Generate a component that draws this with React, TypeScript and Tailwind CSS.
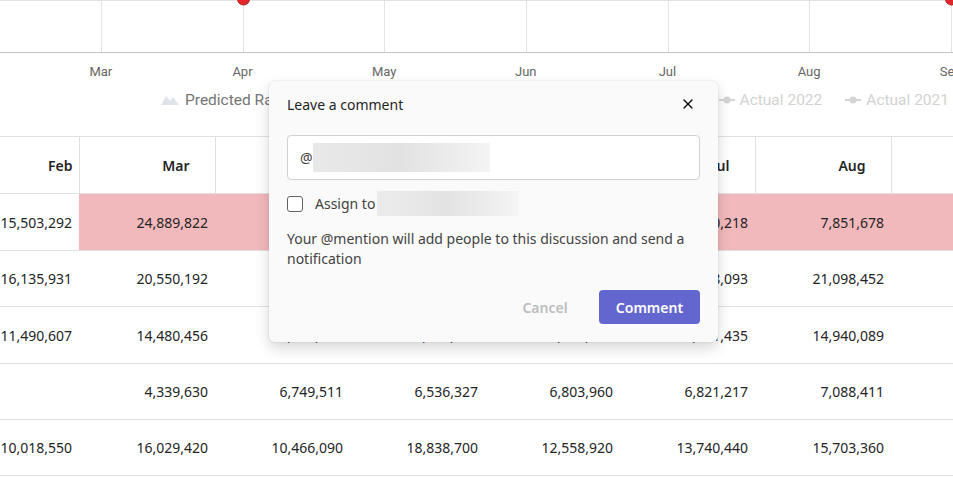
import React from "react";
import { X, TriangleAlert } from "lucide-react";

const gridX = [101, 243, 384, 526, 668, 809, 951];
const axisMonths = ["Mar", "Apr", "May", "Jun", "Jul", "Aug", "Sep"];
const headers = ["Feb", "Mar", "Apr", "May", "Jun", "Jul", "Aug", "Sep"];

interface Row {
  cells: string[];
  height: string;
  highlight?: boolean;
  flag?: boolean;
}

const rows: Row[] = [
  {
    cells: ["15,503,292", "24,889,822", "18,204,517", "21,377,064", "19,615,830", "12,430,218", "7,851,678", "8,402,116"],
    height: "h-[57px]",
    highlight: true,
  },
  {
    cells: ["16,135,931", "20,550,192", "17,962,305", "19,840,776", "18,113,640", "20,318,093", "21,098,452", "9,774,210"],
    height: "h-[56px]",
    flag: true,
  },
  {
    cells: ["11,490,607", "14,480,456", "13,215,908", "12,874,336", "13,902,514", "14,221,435", "14,940,089", "7,311,872"],
    height: "h-[57px]",
    flag: true,
  },
  {
    cells: ["", "4,339,630", "6,749,511", "6,536,327", "6,803,960", "6,821,217", "7,088,411", "3,205,118"],
    height: "h-[56px]",
  },
  {
    cells: ["10,018,550", "16,029,420", "10,466,090", "18,838,700", "12,558,920", "13,740,440", "15,703,360", "6,115,240"],
    height: "h-[56px]",
  },
];

const colWidths = ["w-[79px]", "w-[136px]", "w-[135px]", "w-[135px]", "w-[135px]", "w-[135px]", "w-[136px]", "w-[151px]"];

function LegendLine() {
  return (
    <svg width="18" height="10" viewBox="0 0 18 10" className="shrink-0">
      <line x1="1" y1="5" x2="17" y2="5" stroke="#d4d4d4" strokeWidth="2" />
      <circle cx="9" cy="5" r="3.5" fill="#d4d4d4" />
    </svg>
  );
}

function Chart() {
  return (
    <div className="h-[136px] flex flex-col" style={{ fontFamily: "Roboto, 'Liberation Sans', sans-serif" }}>
      <svg width="953" height="53" className="block shrink-0 overflow-visible">
        <line x1="0" y1="0.5" x2="953" y2="0.5" stroke="#e3e3e3" />
        {gridX.map((x) => (
          <line key={x} x1={x + 0.5} y1="0" x2={x + 0.5} y2="52" stroke="#e3e3e3" />
        ))}
        <line x1="0" y1="52.5" x2="953" y2="52.5" stroke="#c4c4c4" />
        <circle cx="243.5" cy="-1" r="6" fill="#e3262b" stroke="#b51c20" strokeWidth="1" />
        <circle cx="951.5" cy="-1" r="6" fill="#e3262b" stroke="#b51c20" strokeWidth="1" />
      </svg>

      <div className="flex ml-[30px] mt-[11px] text-[13px] leading-4 text-[#666]">
        {axisMonths.map((m) => (
          <span key={m} className="w-[141.67px] shrink-0 text-center">
            {m}
          </span>
        ))}
      </div>

      <div className="flex items-center mt-[10px] pr-[4px] text-[15.5px] leading-5">
        <div className="flex items-center gap-[22px] ml-[161px]">
          <div className="flex items-center gap-[6px] text-[#757575]">
            <svg width="18" height="10" viewBox="0 0 18 10" className="shrink-0">
              <path d="M0 10 L5 1 L9 6 L12 2 L18 10 Z" fill="#dfe4ea" />
            </svg>
            Predicted Range
          </div>
          <div className="flex items-center gap-[5px] text-[#cfcfcf]">
            <LegendLine />
            Forecast 2023
          </div>
        </div>
        <div className="flex items-center gap-[22px] ml-auto text-[#d2d2d2]">
          <div className="flex items-center gap-[4px]">
            <LegendLine />
            Actual 2022
          </div>
          <div className="flex items-center gap-[4px]">
            <LegendLine />
            Actual 2021
          </div>
        </div>
      </div>
    </div>
  );
}

function DataTable() {
  return (
    <div className="overflow-hidden">
      <table className="table-fixed border-collapse w-[1042px] text-[14px] text-[#242424]">
        <colgroup>
          {colWidths.map((w, i) => (
            <col key={i} className={w} />
          ))}
        </colgroup>
        <thead>
          <tr className="h-[57px] border-t border-b border-[#e0e0e0]">
            {headers.map((h, i) => (
              <th
                key={h}
                className={`font-semibold text-right border-r border-[#e0e0e0] ${i === 0 ? "pr-[6px]" : "pr-[25px]"}`}
              >
                {h}
              </th>
            ))}
          </tr>
        </thead>
        <tbody>
          {rows.map((row, r) => (
            <tr key={r} className={`${row.height} border-b border-[#e0e0e0]`}>
              {row.cells.map((c, i) => (
                <td
                  key={i}
                  className={`text-right pr-[7px] ${row.highlight && i > 0 ? "bg-[#f2b9bc]" : ""}`}
                >
                  {i === 7 && row.flag ? (
                    <span className="inline-flex items-center gap-[4px]">
                      <TriangleAlert size={12} className="text-[#e8a33c]" />
                      {c}
                    </span>
                  ) : (
                    c
                  )}
                </td>
              ))}
            </tr>
          ))}
        </tbody>
      </table>
    </div>
  );
}

function CommentDialog() {
  return (
    <div className="absolute left-[269px] top-[81px] w-[449px] rounded-[6px] bg-[#fafafa] px-[18px] pt-[13px] pb-[18px] shadow-[0_6px_14px_rgba(0,0,0,0.16),0_0_2px_rgba(0,0,0,0.14)] text-[14px] text-[#242424]">
      <div className="flex items-center justify-between h-[20px]">
        <span className="font-normal text-[#1f1f1f]">Leave a comment</span>
        <X size={16} strokeWidth={1.8} className="mr-[4px] text-black" />
      </div>

      <div className="mt-[21px] h-[45px] rounded-[4px] border border-[#d1d1d1] bg-white flex items-center pl-[12px]">
        <span className="text-[#424242]">@</span>
        <span className="w-[177px] h-[29px] bg-gradient-to-r from-[#e9e9e9] via-[#e2e2e2] to-[#f4f4f4]" />
      </div>

      <div className="mt-[11px] h-[25px] flex items-center">
        <span className="w-[16px] h-[16px] rounded-[3px] border border-[#616161] bg-white shrink-0" />
        <span className="ml-[12px] text-[#424242]">Assign to</span>
        <span className="ml-[2px] w-[142px] h-[25px] bg-gradient-to-r from-[#ececec] via-[#e3e3e3] to-[#f5f5f5]" />
      </div>

      <p className="mt-[13px] leading-5 text-[#424242]">
        Your @mention will add people to this discussion and send a notification
      </p>

      <div className="mt-[21px] flex justify-end items-center gap-[6px]">
        <button className="w-[96px] h-[34px] text-[#bdbdbd] font-semibold">Cancel</button>
        <button className="w-[101px] h-[34px] rounded-[4px] bg-[#6466d0] text-white font-semibold">Comment</button>
      </div>
    </div>
  );
}

export default function App() {
  return (
    <div
      className="relative w-[953px] h-[477px] overflow-hidden bg-white"
      style={{ fontFamily: "'Noto Sans', 'Open Sans', sans-serif" }}
    >
      <Chart />
      <DataTable />
      <CommentDialog />
    </div>
  );
}
